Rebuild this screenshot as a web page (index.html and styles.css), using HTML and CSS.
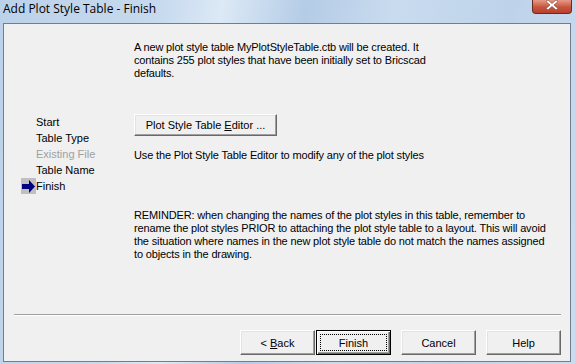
FILE: index.html
```html
<!DOCTYPE html>
<html lang="en">
<head>
    <meta charset="UTF-8">
    <title>Add Plot Style Table - Finish</title>
    <link rel="stylesheet" href="styles.css">
</head>
<body>

<div class="window">
    <div class="titlebar">
        <span class="title">Add Plot Style Table - Finish</span>
        <div class="close-btn">
            <svg width="12" height="10" viewBox="0 0 12 10">
                <path d="M2 0 L6 3.5 L10 0 L12 1.5 L8 5 L12 8.5 L10 10 L6 6.5 L2 10 L0 8.5 L4 5 L0 1.5 Z" fill="#fff" stroke="#7a3a30" stroke-width="0.6"/>
            </svg>
        </div>
    </div>

    <div class="client">
        <div class="wizard">
            <ul class="steps">
                <li><span class="marker"></span>Start</li>
                <li><span class="marker"></span>Table Type</li>
                <li class="disabled"><span class="marker"></span>Existing File</li>
                <li><span class="marker"></span>Table Name</li>
                <li class="current">
                    <span class="marker">
                        <svg width="15" height="15" viewBox="0 0 15 15">
                            <path d="M1 5 H8 V1 L14 7.5 L8 14 V10 H1 Z" fill="#000080"/>
                        </svg>
                    </span>Finish
                </li>
            </ul>

            <div class="content">
                <p class="intro">A new plot style table MyPlotStyleTable.ctb will be created. It contains 255 plot styles that have been initially set to Bricscad defaults.</p>
                <button class="win-btn editor-btn">Plot Style Table <u>E</u>ditor ...</button>
                <p class="hint">Use the Plot Style Table Editor to modify any of the plot styles</p>
                <p class="reminder">REMINDER: when changing the names of the plot styles in this table, remember to rename the plot styles PRIOR to attaching the plot style table to a layout. This will avoid the situation where names in the new plot style table do not match the names assigned to objects in the drawing.</p>
            </div>
        </div>

        <div class="separator"></div>

        <div class="button-row">
            <button class="win-btn back-btn">&lt; <u>B</u>ack</button>
            <button class="win-btn default-btn"><span class="focus">Finish</span></button>
            <button class="win-btn">Cancel</button>
            <button class="win-btn">Help</button>
        </div>
    </div>
</div>

</body>
</html>
```

FILE: styles.css
```css
body {
    margin: 0;
    padding: 0;
    font-family: "Liberation Sans", Arial, sans-serif;
    font-size: 11px;
    background: #c4d7ec;
}

.window {
    width: 575px;
    height: 364px;
    display: flex;
    flex-direction: column;
    box-sizing: border-box;
    background: linear-gradient(100deg, #bcd2ea 0%, #c6d9ee 25%, #dce9f6 35%, #b4cce6 48%, #c9dbef 62%, #bed3ea 80%, #cbdcef 100%);
}

.titlebar {
    height: 23px;
    display: flex;
    justify-content: space-between;
    align-items: flex-start;
}

.title {
    font-family: "Open Sans", "Noto Sans", sans-serif;
    font-size: 12px;
    line-height: 12px;
    padding: 3px 0 0 3px;
    color: #000;
}

.close-btn {
    width: 38px;
    height: 13px;
    margin-right: 3px;
    border: 1px solid #6b2a20;
    border-top: none;
    border-radius: 0 0 4px 4px;
    background: linear-gradient(#e79a88, #c6553f 55%, #b8402c);
    display: flex;
    justify-content: center;
    align-items: flex-start;
    overflow: hidden;
}

.client {
    flex: 1;
    margin: 0 4px 2px 3px;
    border: 1px solid #6e7f93;
    background: #f0f0f0;
    display: flex;
    flex-direction: column;
}

.wizard {
    flex: 1;
    display: flex;
}

.steps {
    list-style: none;
    margin: 0;
    padding: 90px 0 0 17px;
    width: 113px;
}

.steps li {
    display: flex;
    align-items: center;
    height: 16px;
    color: #000;
}

.steps li.disabled {
    color: #a0a0a0;
}

.marker {
    width: 15px;
    height: 16px;
    flex: none;
    display: flex;
    align-items: center;
}

.current .marker {
    background: #c0c0c0;
}

.content {
    padding-top: 17px;
    letter-spacing: -0.15px;
}

.content p {
    margin: 0;
    line-height: 13px;
}

.intro {
    width: 300px;
}

.hint {
    margin-top: 13px !important;
}

.reminder {
    width: 416px;
    margin-top: 47px !important;
}

.separator {
    margin: 0 9px 0 10px;
    border-top: 1px solid #a0a0a0;
    border-bottom: 1px solid #fff;
}

.button-row {
    display: flex;
    justify-content: flex-end;
    gap: 10px;
    padding: 14px 9px 6px 0;
}

.win-btn {
    width: 75px;
    height: 25px;
    padding: 0;
    font-family: "Liberation Sans", Arial, sans-serif;
    font-size: 11px;
    color: #000;
    background: #f0f0f0;
    border: 1px solid;
    border-color: #fff #696969 #696969 #fff;
    box-shadow: inset -1px -1px 0 #a0a0a0, inset 1px 1px 0 #e3e3e3;
}

.win-btn.editor-btn {
    display: block;
    width: 143px;
    height: 22px;
    margin-top: 34px;
    letter-spacing: 0;
}

.back-btn {
    margin-right: -9px;
}

.default-btn {
    border: 1px solid #000;
    box-shadow: inset 1px 1px 0 #fff, inset -1px -1px 0 #696969, inset -2px -2px 0 #a0a0a0;
    display: flex;
    padding: 3px;
}

.focus {
    flex: 1;
    display: flex;
    align-items: center;
    justify-content: center;
    border: 1px dotted #000;
}
```
